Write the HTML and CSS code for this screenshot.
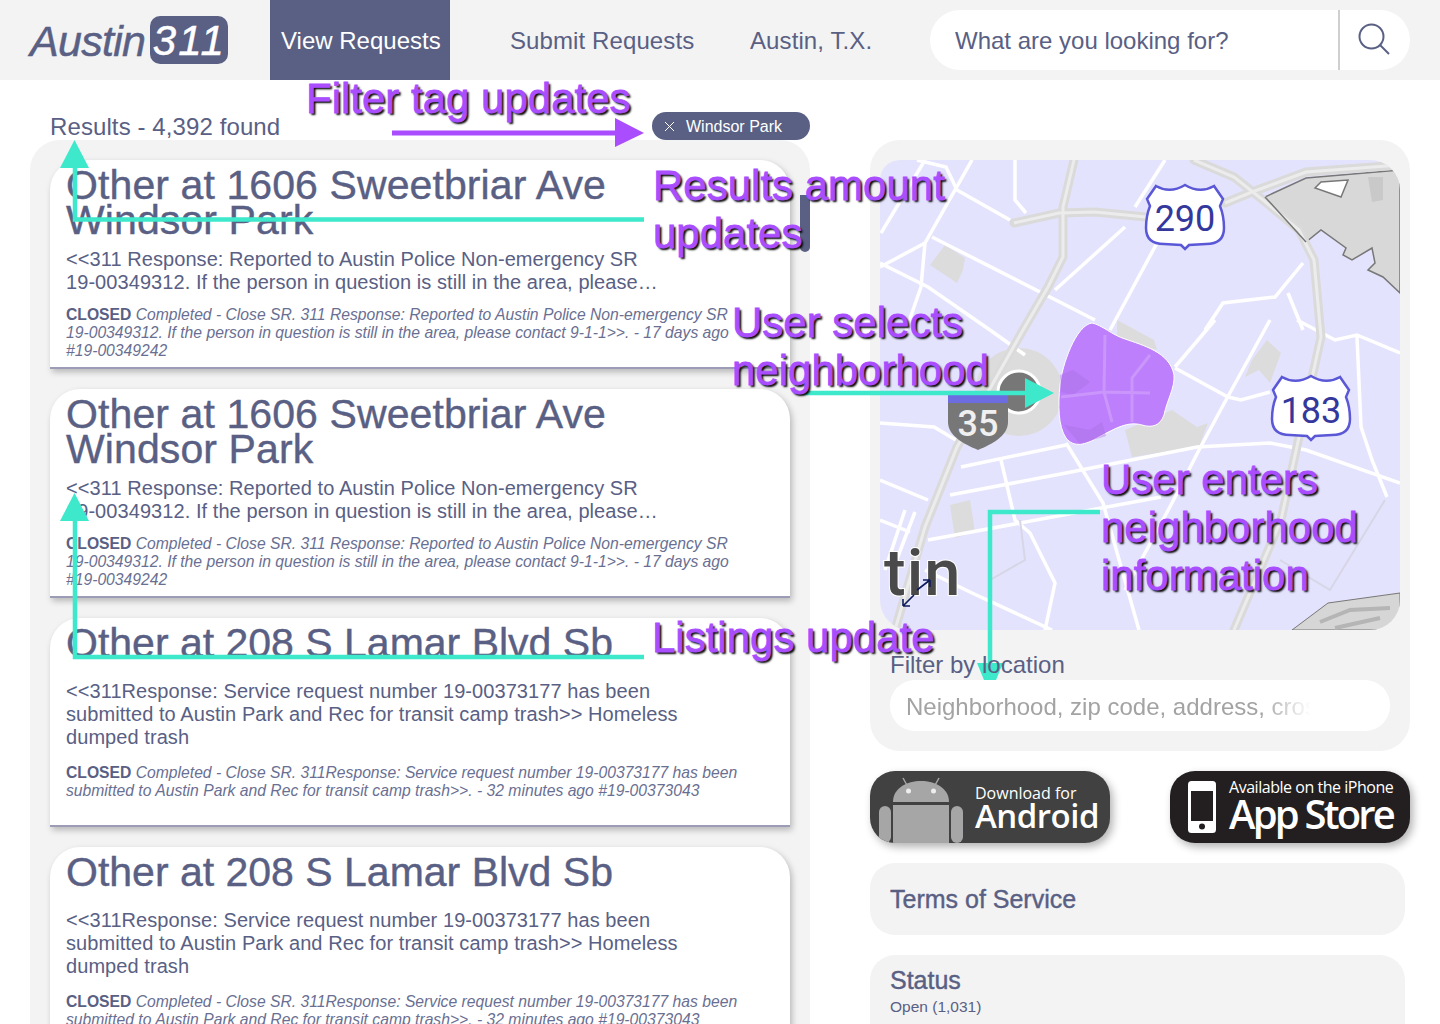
FILE: index.html
```html
<!DOCTYPE html>
<html lang="en">
<head>
    <meta charset="UTF-8">
    <title>Austin 311</title>
    <link rel="stylesheet" href="styles.css">
</head>
<body>
    <!-- Top bar -->
    <header class="topbar">
        <div class="logo"><span class="logo-name">Austin</span><span class="logo-num">311</span></div>
        <nav class="nav">
            <a class="nav-item nav-active">View Requests</a>
            <a class="nav-item nav-submit">Submit Requests</a>
            <a class="nav-item nav-city">Austin, T.X.</a>
        </nav>
        <div class="search">
            <span class="search-text">What are you looking for?</span>
            <span class="search-btn">
                <svg width="32" height="32" viewBox="0 0 32 32" fill="none" stroke="#596084" stroke-width="2"><circle cx="13.5" cy="13.5" r="12"/><path d="M22 22l9 9"/></svg>
            </span>
        </div>
    </header>

    <main class="content">
        <!-- Result list -->
        <section class="results">
            <div class="results-head">
                <span class="results-count">Results - 4,392 found</span>
                <span class="tag">
                    <svg class="tag-x" width="11" height="11" viewBox="0 0 11 11" stroke="#fff" stroke-width="1"><path d="M1 1l9 9M10 1l-9 9"/></svg>
                    Windsor Park
                </span>
            </div>
            <div class="list">
                <span class="scroll-thumb"></span>
                <article class="card">
                    <h2 class="card-title">Other at 1606 Sweetbriar Ave<br>Windsor Park</h2>
                    <p class="card-body">&lt;&lt;311 Response: Reported to Austin Police Non-emergency SR<br>19-00349312. If the person in question is still in the area, please…</p>
                    <p class="card-meta"><b>CLOSED</b> Completed - Close SR. 311 Response: Reported to Austin Police Non-emergency SR<br>19-00349312. If the person in question is still in the area, please contact 9-1-1&gt;&gt;. - 17 days ago<br>#19-00349242</p>
                </article>
                <article class="card">
                    <h2 class="card-title">Other at 1606 Sweetbriar Ave<br>Windsor Park</h2>
                    <p class="card-body">&lt;&lt;311 Response: Reported to Austin Police Non-emergency SR<br>19-00349312. If the person in question is still in the area, please…</p>
                    <p class="card-meta"><b>CLOSED</b> Completed - Close SR. 311 Response: Reported to Austin Police Non-emergency SR<br>19-00349312. If the person in question is still in the area, please contact 9-1-1&gt;&gt;. - 17 days ago<br>#19-00349242</p>
                </article>
                <article class="card card-short">
                    <h2 class="card-title">Other at 208 S Lamar Blvd Sb</h2>
                    <p class="card-body">&lt;&lt;311Response: Service request number 19-00373177 has been<br>submitted to Austin Park and Rec for transit camp trash&gt;&gt; Homeless<br>dumped trash</p>
                    <p class="card-meta"><b>CLOSED</b> Completed - Close SR. 311Response: Service request number 19-00373177 has been<br>submitted to Austin Park and Rec for transit camp trash&gt;&gt;. - 32 minutes ago #19-00373043</p>
                </article>
                <article class="card card-short">
                    <h2 class="card-title">Other at 208 S Lamar Blvd Sb</h2>
                    <p class="card-body">&lt;&lt;311Response: Service request number 19-00373177 has been<br>submitted to Austin Park and Rec for transit camp trash&gt;&gt; Homeless<br>dumped trash</p>
                    <p class="card-meta"><b>CLOSED</b> Completed - Close SR. 311Response: Service request number 19-00373177 has been<br>submitted to Austin Park and Rec for transit camp trash&gt;&gt;. - 32 minutes ago #19-00373043</p>
                </article>
            </div>
        </section>

        <!-- Map and filters -->
        <aside class="side">
            <section class="map-panel">
                <div class="map">
                    <svg width="520" height="470" viewBox="0 0 520 470">
                        <rect width="520" height="470" fill="#e4e3fd"/>
                        <!-- grey areas -->
                        <g fill="#dcdcdc">
                            <path d="M50 105L65 85 85 98 83 110 77 123z"/>
                            <path d="M245 270L292 250 317 267 328 263 319 287 252 297z"/>
                            <path d="M365 217L379 210 390 223 401 193 387 180 372 200z"/>
                            <path d="M237 160L274 180 277 190 237 177z"/>
                            <circle cx="139" cy="232" r="44"/>
                            <path d="M70 345L90 340 95 372 75 378z"/>
                        </g>
                        <path d="M385 37L426 82 441 70 466 88 463 95 472 100 492 88 495 103 488 110 503 117 520 133V10L426 18z" fill="#d8d8d8" stroke="#777" stroke-width="1.500"/>
                        <path d="M488 17H503V40L492 42z" fill="#c9c9c9"/>
                        <path d="M435 28L441 22 468 20 461 37z" fill="#fff" stroke="#777" stroke-width="1.500"/>
                        <path d="M412 470L448 443 520 433V470z" fill="#d6d6d6" stroke="#777" stroke-width="1"/>
                        <path d="M440 462L470 450 510 448M455 468L500 458" fill="none" stroke="#b5b5b5" stroke-width="4"/>
                        <!-- streets -->
                        <g fill="none" stroke="#fff" stroke-width="3.500">
                            <path d="M45 0L1 73"/>
                            <path d="M92 0L45 83 17 98 0 107"/>
                            <path d="M37 0L66 7 77 30 130 60"/>
                            <path d="M135 0V40L146 53"/>
                            <path d="M52 77L215 160"/>
                            <path d="M0 103L48 127 110 170 145 195"/>
                            <path d="M45 83L41 127 26 170"/>
                            <path d="M285 0L255 47"/>
                            <path d="M245 67L175 130"/>
                            <path d="M277 83L230 170"/>
                            <path d="M325 170L343 143 395 137 423 103"/>
                            <path d="M408 133L423 170"/>
                            <path d="M390 160L346 240 319 290 292 343 245 430"/>
                            <path d="M295 208L348 237 361 240 390 232"/>
                            <path d="M70 335L186 313 317 287 390 283 426 290 520 323"/>
                            <path d="M81 307L186 285"/>
                            <path d="M121 300L135 360 150 373 175 423 165 470"/>
                            <path d="M186 283L223 343 259 470"/>
                            <path d="M48 380L281 337"/>
                            <path d="M0 263L54 267 81 283"/>
                            <path d="M0 320L48 340"/>
                            <path d="M45 410L92 433 172 470"/>
                            <path d="M417 160L455 180 477 175 520 193"/>
                            <path d="M477 177L481 267 492 300 507 337"/>
                            <path d="M335 160L295 207"/>
                            <path d="M0 360L30 372"/>
                            <path d="M25 350L5 410M35 352L12 412"/>
                        </g>
                        <!-- highways -->
                        <g fill="none" stroke="#dadada" stroke-width="9" stroke-linecap="round">
                            <path d="M194 0L183 47V97L168 127 143 170 77 287 45 367 15 470"/>
                            <path d="M134 63L179 53 215 52 266 57"/>
                            <path d="M345 43L372 32 426 12 520 5"/>
                            <path d="M314 0L354 17 383 40 419 70 434 100 441 177 419 277 401 360 354 470"/>
                        </g>
                        <g fill="none" stroke="#ececec" stroke-width="3">
                            <path d="M194 0L183 47V97L168 127 143 170 77 287 45 367 15 470"/>
                            <path d="M134 63L179 53 215 52 266 57"/>
                            <path d="M345 43L372 32 426 12 520 5"/>
                            <path d="M314 0L354 17 383 40 419 70 434 100 441 177 419 277 401 360 354 470"/>
                        </g>
                        <path d="M140 360L145 400 110 420M400 400L450 430 505 340" fill="none" stroke="#d6d6e6" stroke-width="2"/>
                        <path d="M385 37L426 82" stroke="#777" stroke-width="1.500"/>
                        <!-- interchange marker -->
                        <circle cx="139" cy="232" r="21" fill="#777" stroke="#fff" stroke-width="3"/>
                        <!-- I-35 shield -->
                        <path d="M68 233H128V262C128 276 112 284 98 290 84 284 68 276 68 262z" fill="#777"/>
                        <rect x="68" y="233" width="60" height="10" fill="#6d6ce0"/>
                        <text x="98" y="276" text-anchor="middle" class="shield-dark">35</text>
                        <!-- selected neighborhood -->
                        <path d="M212 163C222 165 232 175 245 179 262 185 290 192 294 215 295 228 287 240 284 255 280 266 272 268 262 265 248 261 236 268 219 277 205 285 194 288 186 278 178 266 178 245 180 225 182 205 196 165 212 163z" fill="#bd7ffb" stroke="#fff" stroke-width="1"/>
                        <path d="M180 215L193 210 210 222 193 235 181 232zM184 265L210 270 222 262 226 276 200 284z" fill="#a86ee0" opacity=".4"/>
                        <path d="M225 175L224 232 232 262M181 237L224 232 270 233M270 195L252 218 252 262" fill="none" stroke="#ca96fb" stroke-width="3"/>
                        <!-- US shields -->
                        <g transform="translate(266 24)">
                            <path d="M10 2Q24 10 39 1 54 10 68 2L77 15 74 22Q78 32 78 44 78 60 60 60L43 61 39 65 35 61 18 60Q0 60 0 44 0 32 4 22L1 15z" fill="#fff" stroke="#5a58d6" stroke-width="2.500"/>
                            <text x="39" y="47" text-anchor="middle" class="shield-num">290</text>
                        </g>
                        <g transform="translate(392 215)">
                            <path d="M10 2Q24 10 39 1 54 10 68 2L77 15 74 22Q78 32 78 44 78 60 60 60L43 61 39 65 35 61 18 60Q0 60 0 44 0 32 4 22L1 15z" fill="#fff" stroke="#5a58d6" stroke-width="2.500"/>
                            <text x="39" y="48" text-anchor="middle" class="shield-num">183</text>
                        </g>
                        <text x="4" y="435" class="map-label">tin</text>
                        <path d="M37 430L50 420M50 420H43M50 420V427M34 435L23 446M23 446H30M23 446V439" fill="none" stroke="#0d1b5e" stroke-width="1.600"/>
                    </svg>
                </div>
                <label class="filter-label">Filter by location</label>
                <div class="filter-input"><span class="filter-hint">Neighborhood, zip code, address, cross street</span></div>
            </section>

            <div class="stores">
                <a class="store store-android">
                    <svg class="android-icon" width="100" height="72" viewBox="0 0 100 72">
                        <g fill="#a6a6a6">
                            <path d="M23 31C23 3 79 3 79 31z"/>
                            <rect x="23" y="34" width="56" height="40"/>
                            <rect x="9" y="35" width="12" height="37" rx="6"/>
                            <rect x="81" y="35" width="12" height="37" rx="6"/>
                        </g>
                        <path d="M33 7L38 16M69 7L64 16" stroke="#a6a6a6" stroke-width="1.500"/>
                        <circle cx="38.500" cy="20" r="2.500" fill="#eee"/>
                        <circle cx="63.500" cy="20" r="2.500" fill="#eee"/>
                    </svg>
                    <span class="store-text">
                        <span class="store-small">Download for</span>
                        <span class="store-big">Android</span>
                    </span>
                </a>
                <a class="store store-apple">
                    <svg class="iphone-icon" width="28" height="52" viewBox="0 0 28 52">
                        <rect width="28" height="52" rx="3.500" fill="#fff"/>
                        <rect x="3" y="10" width="22" height="30" fill="#231f20"/>
                        <circle cx="14" cy="45.500" r="3" fill="#231f20"/>
                    </svg>
                    <span class="store-text store-text-apple">
                        <span class="store-small store-small-apple">Available on the iPhone</span>
                        <span class="store-big store-big-apple">App Store</span>
                    </span>
                </a>
            </div>

            <section class="box box-terms">Terms of Service</section>
            <section class="box box-status">
                <h3 class="box-title">Status</h3>
                <p class="status-row">Open (1,031)</p>
            </section>
        </aside>
    </main>

    <!-- Annotations drawn over the screen -->
    <svg class="arrows" width="1440" height="1024" viewBox="0 0 1440 1024">
        <g fill="none" stroke="#3de8cb" stroke-width="4.500">
            <path d="M644 219.500H75V165"/>
            <path d="M644 657H75V518"/>
            <path d="M803 393H1028"/>
            <path d="M1100 512H990V664"/>
        </g>
        <g fill="#3de8cb">
            <path d="M74.500 140L89 168H60z"/>
            <path d="M74.500 493L89 521H60z"/>
            <path d="M1025 378L1054 393 1025 408z"/>
            <path d="M977 663H1003L996 680H984z"/>
        </g>
        <path d="M392 133H618" stroke="#a94dff" stroke-width="5"/>
        <path d="M615 118L644 133 615 147z" fill="#a94dff"/>
    </svg>
    <div class="note note-filter">Filter tag updates</div>
    <div class="note note-amount">Results amount<br>updates</div>
    <div class="note note-select">User selects<br>neighborhood</div>
    <div class="note note-enter">User enters<br>neighborhood<br>information</div>
    <div class="note note-list">Listings update</div>
</body>
</html>
```

FILE: styles.css
```css
html, body {
    margin: 0;
    height: 1024px;
    overflow: hidden;
}

body {
    position: relative;
    font-family: "Liberation Sans", Arial, sans-serif;
    color: #596084;
    background-color: #ffffff;
}

/* Top bar */
.topbar {
    display: flex;
    align-items: center;
    height: 80px;
    background-color: #f3f3f3;
}

.logo {
    display: flex;
    align-items: center;
    width: 270px;
    padding-left: 30px;
    padding-top: 2px;
    box-sizing: border-box;
}

.logo-name {
    font-size: 43px;
    font-style: italic;
    letter-spacing: -0.7px;
    -webkit-text-stroke: 0.5px #596084;
}

.logo-num {
    margin-left: 5px;
    width: 78px;
    height: 48px;
    line-height: 50px;
    text-align: center;
    font-size: 42px;
    font-style: italic;
    letter-spacing: 2px;
    color: #ffffff;
    -webkit-text-stroke: 0.5px #ffffff;
    background-color: #596084;
    border-radius: 10px;
    margin-top: -2px;
}

.nav {
    display: flex;
    height: 80px;
    width: 660px;
}

.nav-item {
    display: flex;
    align-items: center;
    padding-top: 2px;
    box-sizing: border-box;
    font-size: 24px;
    letter-spacing: 0.1px;
}

.nav-active {
    width: 180px;
    padding-left: 11px;
    letter-spacing: 0;
    color: #ffffff;
    background-color: #596084;
}

.nav-submit {
    margin-left: 60px;
    width: 240px;
}

.search {
    display: flex;
    align-items: center;
    justify-content: space-between;
    width: 480px;
    height: 60px;
    padding-left: 25px;
    box-sizing: border-box;
    background-color: #ffffff;
    border-radius: 30px;
    font-size: 24px;
}

.search-text {
    padding-top: 2px;
}

.search-btn {
    display: flex;
    align-items: center;
    justify-content: center;
    width: 72px;
    height: 60px;
    padding: 0 3px 2px 0;
    box-sizing: border-box;
    border-left: 2px solid #cfcfcf;
}

/* Page columns */
.content {
    display: flex;
    gap: 60px;
    padding-left: 30px;
}

.results {
    width: 780px;
}

.results-head {
    display: flex;
    justify-content: space-between;
    align-items: flex-end;
    height: 60px;
    padding-left: 20px;
}

.results-count {
    font-size: 24px;
    line-height: 26px;
    letter-spacing: 0.1px;
}

.tag {
    display: flex;
    align-items: center;
    width: 158px;
    height: 28px;
    box-sizing: border-box;
    padding: 1px 0 0 12px;
    font-size: 16px;
    color: #ffffff;
    background-color: #596084;
    border-radius: 14px;
}

.tag-x {
    margin-right: 11px;
}

.list {
    position: relative;
    display: flex;
    flex-direction: column;
    gap: 20px;
    padding: 20px;
    height: 900px;
    background-color: #f3f3f3;
    border-radius: 30px 30px 0 0;
}

.scroll-thumb {
    position: absolute;
    right: 0;
    top: 55px;
    width: 10px;
    height: 57px;
    background-color: #596084;
    border-radius: 0 0 5px 5px;
}

.card {
    flex: none;
    height: 209px;
    box-sizing: border-box;
    padding: 8px 16px 0;
    background-color: #ffffff;
    border-radius: 30px 30px 0 0;
    border-bottom: 2px solid #9c9cb6;
    box-shadow: 2px 3px 6px rgba(0, 0, 0, 0.25);
}

.card-title {
    margin: 0 0 10px;
    font-size: 41px;
    line-height: 35px;
    letter-spacing: 0.1px;
    font-weight: normal;
    -webkit-text-stroke: 0.4px #596084;
}

.card-short .card-title {
    margin-bottom: 19px;
    letter-spacing: 0;
}

.card-body {
    margin: 0 0 12px;
    font-size: 20px;
    line-height: 23px;
    letter-spacing: 0.07px;
}

.card-short .card-body {
    margin-bottom: 15px;
}

.card-meta {
    margin: 0;
    font-size: 15.7px;
    line-height: 18px;
    font-style: italic;
    color: #696f92;
}

.card-meta b {
    font-style: normal;
    color: #596084;
}

/* Right column */
.side {
    width: 540px;
    padding-top: 60px;
}

.map-panel {
    height: 611px;
    padding: 20px 10px 0;
    box-sizing: border-box;
    background-color: #f3f3f3;
    border-radius: 30px;
}

.map {
    height: 470px;
    width: 520px;
    overflow: hidden;
    border-radius: 20px 30px 30px 30px;
}

.map svg {
    display: block;
}

.shield-num {
    font-family: Roboto, sans-serif;
    font-size: 36px;
    fill: #34389c;
}

.shield-dark {
    font-family: Roboto, sans-serif;
    font-size: 36px;
    font-weight: 500;
    fill: #f0f0f0;
}

.map-label {
    font-family: Roboto, sans-serif;
    font-size: 65px;
    font-weight: 500;
    letter-spacing: 1px;
    fill: #4a4a4a;
    stroke: #ffffff;
    stroke-width: 2px;
    paint-order: stroke;
}

.filter-label {
    position: relative;
    z-index: 1;
    display: block;
    margin: 21px 0 0 10px;
    font-size: 24px;
    line-height: 28px;
}

.filter-input {
    display: flex;
    align-items: center;
    width: 500px;
    height: 51px;
    margin: 1px 0 0 10px;
    padding: 2px 0 0 16px;
    box-sizing: border-box;
    background-color: #ffffff;
    border-radius: 25px;
    overflow: hidden;
}

.filter-hint {
    width: 405px;
    overflow: hidden;
    white-space: nowrap;
    font-size: 24px;
    color: #a3a3a3;
    -webkit-mask-image: linear-gradient(to right, #000 355px, transparent 405px);
    mask-image: linear-gradient(to right, #000 355px, transparent 405px);
}

.stores {
    display: flex;
    justify-content: space-between;
    margin-top: 20px;
}

.store {
    display: flex;
    align-items: center;
    width: 240px;
    height: 72px;
    overflow: hidden;
    color: #ffffff;
    border-radius: 25px;
    box-shadow: 3px 4px 8px rgba(0, 0, 0, 0.3);
    font-family: "Open Sans", sans-serif;
}

.store-android {
    background-color: #414141;
}

.store-apple {
    background-color: #231f20;
}

.android-icon {
    flex: none;
    margin-right: 5px;
}

.iphone-icon {
    flex: none;
    margin: 0 13px 0 18px;
}

.store-text {
    display: flex;
    flex-direction: column;
}

.store-text-apple {
    padding-bottom: 4px;
}

.store-small {
    font-size: 16px;
    line-height: 20px;
    white-space: nowrap;
}

.store-small-apple {
    margin-top: -2px;
    letter-spacing: -0.47px;
}

.store-big {
    margin-top: -2px;
    font-size: 33px;
    line-height: 30px;
    font-weight: 600;
    letter-spacing: -0.5px;
    white-space: nowrap;
}

.store-big-apple {
    margin-top: 0;
    font-size: 40px;
    line-height: 34px;
    letter-spacing: -2.8px;
}

.box {
    width: 535px;
    box-sizing: border-box;
    margin-top: 20px;
    padding-left: 20px;
    background-color: #f3f3f3;
    border-radius: 25px;
}

.box-terms {
    display: flex;
    align-items: center;
    height: 72px;
    padding-top: 1px;
    font-size: 25px;
    -webkit-text-stroke: 0.4px #596084;
}

.box-status {
    height: 200px;
    padding-top: 11px;
}

.box-title {
    margin: 0;
    font-size: 25px;
    line-height: 28px;
    font-weight: normal;
    -webkit-text-stroke: 0.4px #596084;
}

.status-row {
    margin: 3px 0 0;
    font-size: 15.500px;
    line-height: 20px;
}

/* Annotation layer */
.arrows {
    position: absolute;
    top: 0;
    left: 0;
}

.note {
    position: absolute;
    font-size: 42px;
    line-height: 48px;
    white-space: nowrap;
    color: #a94dff;
    -webkit-text-stroke: 0.8px #a94dff;
    text-shadow: 2px 2px 2px #000000;
}

.note-filter {
    left: 306px;
    top: 75px;
}

.note-amount {
    left: 653px;
    top: 162px;
}

.note-select {
    left: 732px;
    top: 299px;
}

.note-enter {
    left: 1101px;
    top: 456px;
}

.note-list {
    left: 652px;
    top: 614px;
}
```
